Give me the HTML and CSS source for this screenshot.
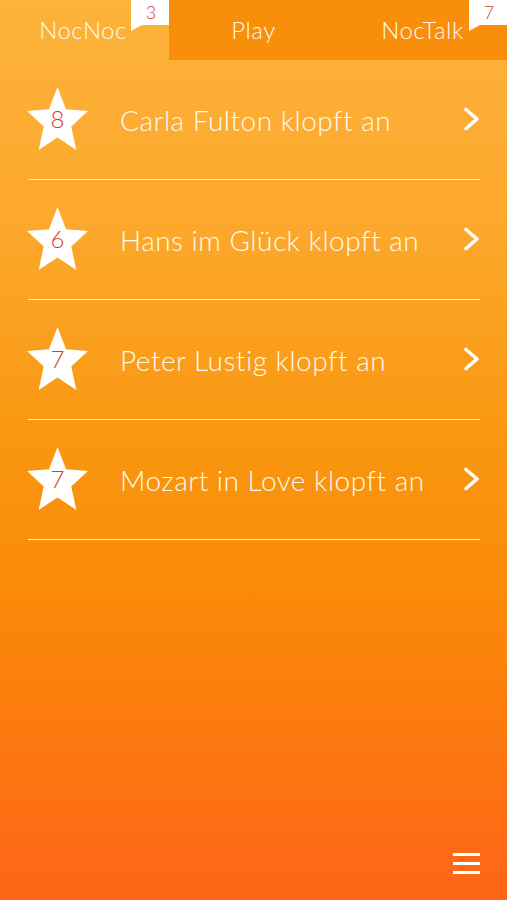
FILE: index.html
```html
<!DOCTYPE html>
<html>
<head>
<meta charset="utf-8">
<link rel="stylesheet" href="styles.css">
</head>
<body>
<div class="app">
  <header class="tabs">
    <div class="tab tab-active"><span class="tab-label">NocNoc</span><span class="badge">3</span></div>
    <div class="tab-group">
      <div class="tab"><span class="tab-label">Play</span></div>
      <div class="tab"><span class="tab-label">NocTalk</span><span class="badge">7</span></div>
    </div>
  </header>
  <ul class="list">
    <li class="row">
      <div class="star"><svg viewBox="-30.4 -32 60.8 57.9" width="61" height="63" preserveAspectRatio="none"><polygon points="0,-32 8.5,-11.6 30.4,-9.9 13.7,4.4 18.8,25.9 0,14.4 -18.8,25.9 -13.7,4.4 -30.4,-9.9 -8.5,-11.6" fill="#fff"/></svg><span class="star-num">8</span></div>
      <span class="row-text">Carla Fulton klopft an</span>
      <svg class="chev" viewBox="0 0 18 24" width="18" height="24"><polyline points="3,2.5 14,12 3,21.5" fill="none" stroke="#fff" stroke-width="3.6" stroke-linecap="round" stroke-linejoin="round"/></svg>
    </li>
    <li class="row">
      <div class="star"><svg viewBox="-30.4 -32 60.8 57.9" width="61" height="63" preserveAspectRatio="none"><polygon points="0,-32 8.5,-11.6 30.4,-9.9 13.7,4.4 18.8,25.9 0,14.4 -18.8,25.9 -13.7,4.4 -30.4,-9.9 -8.5,-11.6" fill="#fff"/></svg><span class="star-num">6</span></div>
      <span class="row-text">Hans im Glück klopft an</span>
      <svg class="chev" viewBox="0 0 18 24" width="18" height="24"><polyline points="3,2.5 14,12 3,21.5" fill="none" stroke="#fff" stroke-width="3.6" stroke-linecap="round" stroke-linejoin="round"/></svg>
    </li>
    <li class="row">
      <div class="star"><svg viewBox="-30.4 -32 60.8 57.9" width="61" height="63" preserveAspectRatio="none"><polygon points="0,-32 8.5,-11.6 30.4,-9.9 13.7,4.4 18.8,25.9 0,14.4 -18.8,25.9 -13.7,4.4 -30.4,-9.9 -8.5,-11.6" fill="#fff"/></svg><span class="star-num">7</span></div>
      <span class="row-text">Peter Lustig klopft an</span>
      <svg class="chev" viewBox="0 0 18 24" width="18" height="24"><polyline points="3,2.5 14,12 3,21.5" fill="none" stroke="#fff" stroke-width="3.6" stroke-linecap="round" stroke-linejoin="round"/></svg>
    </li>
    <li class="row">
      <div class="star"><svg viewBox="-30.4 -32 60.8 57.9" width="61" height="63" preserveAspectRatio="none"><polygon points="0,-32 8.5,-11.6 30.4,-9.9 13.7,4.4 18.8,25.9 0,14.4 -18.8,25.9 -13.7,4.4 -30.4,-9.9 -8.5,-11.6" fill="#fff"/></svg><span class="star-num">7</span></div>
      <span class="row-text">Mozart in Love klopft an</span>
      <svg class="chev" viewBox="0 0 18 24" width="18" height="24"><polyline points="3,2.5 14,12 3,21.5" fill="none" stroke="#fff" stroke-width="3.6" stroke-linecap="round" stroke-linejoin="round"/></svg>
    </li>
  </ul>
  <footer class="footer">
    <div class="menu"><span></span><span></span><span></span></div>
  </footer>
</div>
</body>
</html>
```
FILE: styles.css
```css
* { box-sizing: border-box; }
html, body { margin: 0; padding: 0; }
body {
  width: 507px;
  height: 900px;
  overflow: hidden;
  font-family: Lato, "Noto Sans", sans-serif;
  color: #fffaf0;
}
.app {
  height: 900px;
  display: flex;
  flex-direction: column;
  background: linear-gradient(to bottom, #fdb23a 0%, #fca82c 25%, #f9960f 50%, #fa8a08 66%, #fc790f 82%, #fe6418 100%);
}
.tabs {
  display: flex;
  height: 60px;
}
.tab {
  position: relative;
  width: 169px;
  display: flex;
  align-items: center;
  justify-content: center;
  padding-bottom: 2px;
}
.tab-active { width: 170px; }
.tab-group {
  flex: 1;
  display: flex;
  background: #f88e0a;
}
.tab-group .tab { flex: 1; }
.tab-label {
  font-size: 24px;
  font-weight: 300;
  letter-spacing: 0.5px;
}
.tab-active .tab-label { margin-right: 3px; }
.badge {
  position: absolute;
  top: 0;
  right: 0;
  width: 38px;
  height: 25px;
  background: #fff;
  color: #d5452c;
  font-size: 18px;
  font-weight: 300;
  line-height: 25px;
  text-align: center;
  padding-left: 2px;
}
.badge::after {
  content: "";
  position: absolute;
  left: 0;
  top: 25px;
  border-top: 6px solid #fff;
  border-right: 11px solid transparent;
}
.list {
  list-style: none;
  margin: 0;
  padding: 0 27px 0 28px;
}
.row {
  height: 120px;
  display: flex;
  align-items: center;
  border-bottom: 1.5px solid rgba(255, 246, 230, 0.9);
  padding-top: 1px;
}
.star {
  position: relative;
  width: 61px;
  height: 63px;
  margin-left: -1px;
  margin-top: -3px;
}
.star svg { display: block; }
.star-num {
  position: absolute;
  inset: 0;
  display: flex;
  align-items: center;
  justify-content: center;
  padding-top: 1px;
  color: #d4402c;
  font-size: 24px;
  font-weight: 300;
  line-height: 1;
}
.row-text {
  margin-left: 32px;
  font-size: 28px;
  font-weight: 300;
  flex: 1;
  letter-spacing: 0.5px;
}
.chev {
  margin-right: -1px;
  margin-top: -2px;
}
.footer {
  margin-top: auto;
  height: 90px;
  display: flex;
  justify-content: flex-end;
  padding: 43px 27px 0 0;
}
.menu {
  width: 27px;
  display: flex;
  flex-direction: column;
  gap: 6px;
}
.menu span {
  display: block;
  height: 3px;
  background: #fff;
}
```
